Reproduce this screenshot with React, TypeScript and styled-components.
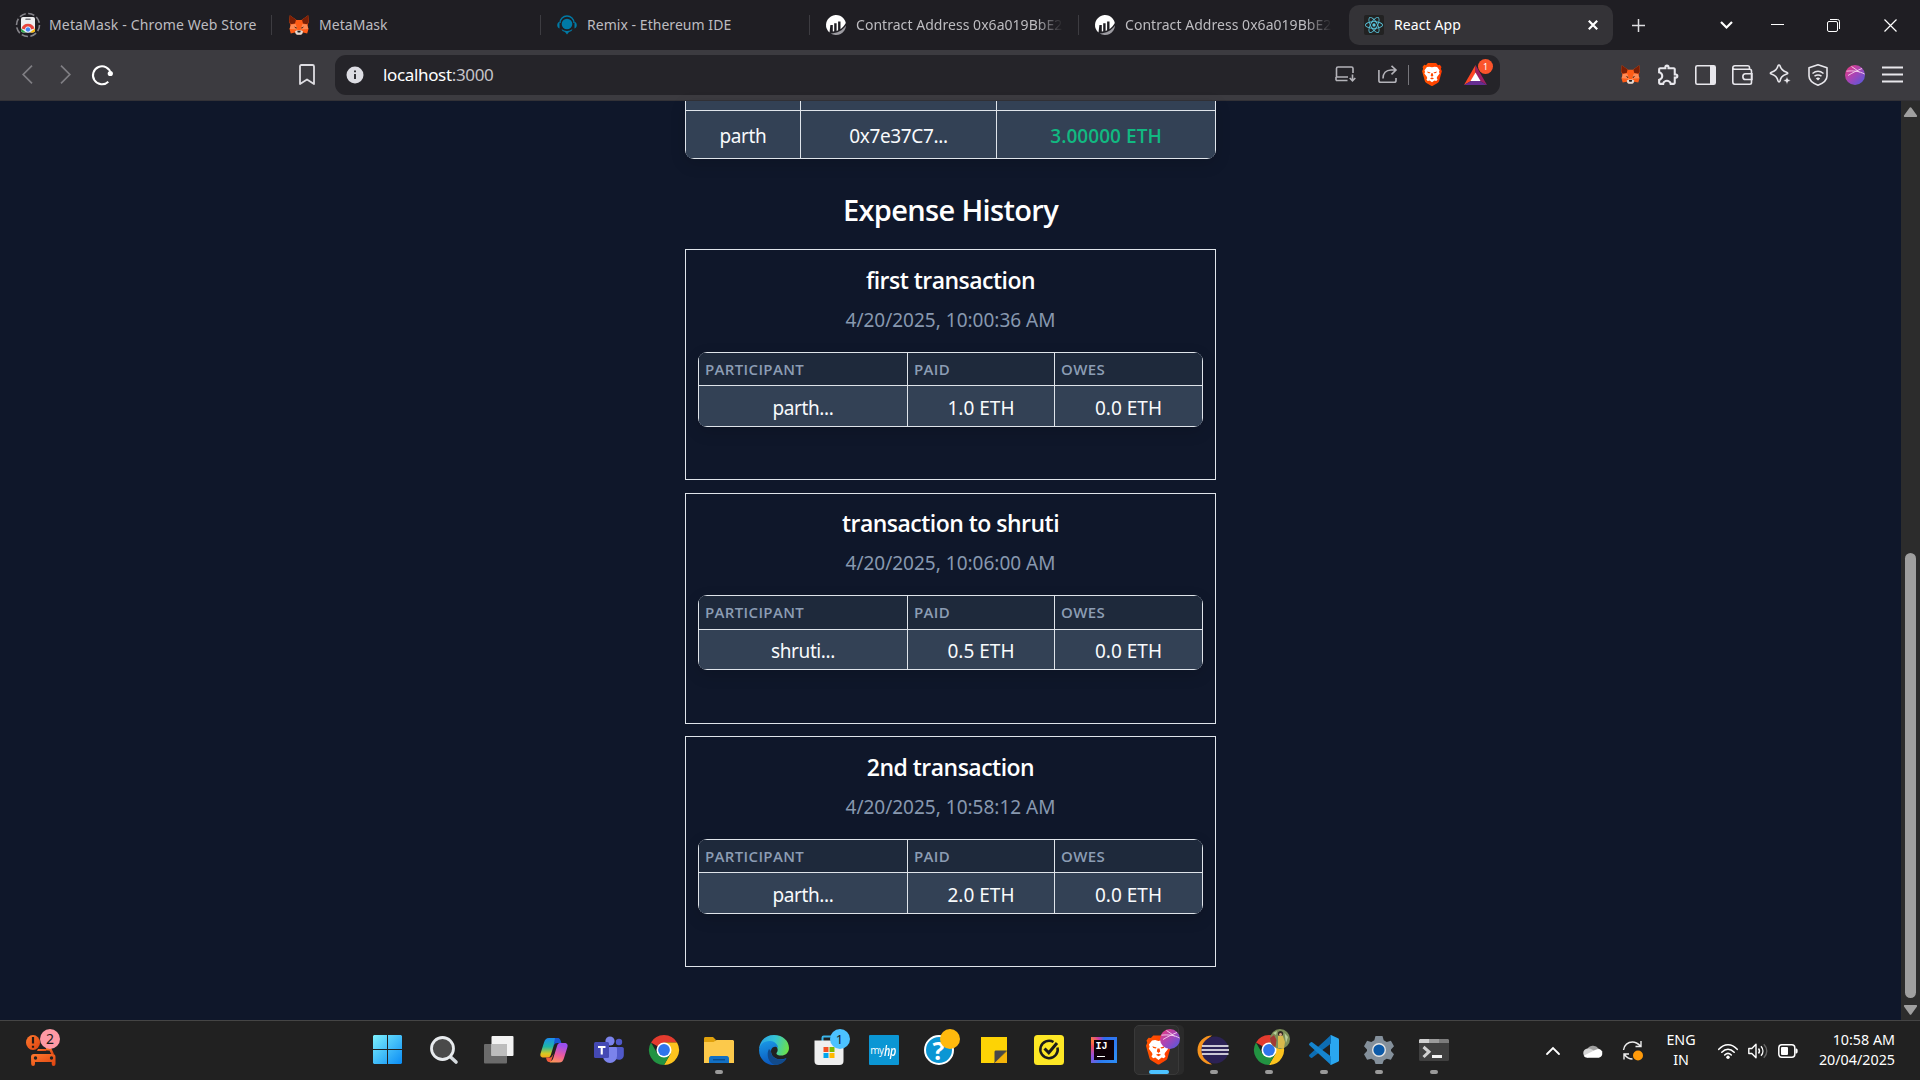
import React from 'react';
import styled, { createGlobalStyle } from 'styled-components';
import { SiReact } from 'react-icons/si';
import { MdOutlineExtension } from 'react-icons/md';

const GlobalStyle = createGlobalStyle`
  *, *::before, *::after { box-sizing: border-box; }
  html, body { margin: 0; padding: 0; background: #0f172a; overflow: hidden; }
  body { font-family: "Noto Sans", "Open Sans", sans-serif; color: #fff; }
  svg { display: block; flex: none; overflow: visible; }
`;

const Screen = styled.div`
  display: flex;
  flex-direction: column;
  width: 1920px;
  height: 1080px;
  overflow: hidden;
`;

/* ---------- tab strip ---------- */

const TabStrip = styled.header`
  display: flex;
  align-items: center;
  height: 50px;
  background: #1f1e23;
`;

const Tab = styled.div<{ $w: number; $pl: number; $gap?: number; $divider?: boolean }>`
  display: flex;
  align-items: center;
  gap: ${(p) => p.$gap ?? 10}px;
  width: ${(p) => p.$w}px;
  height: 20px;
  padding-left: ${(p) => p.$pl}px;
  border-right: 1px solid ${(p) => (p.$divider === false ? 'transparent' : '#3d3c41')};
`;

const TabTitle = styled.span<{ $fade?: boolean; $ls?: number }>`
  width: ${(p) => (p.$fade ? '207px' : 'auto')};
  overflow: hidden;
  white-space: nowrap;
  font-size: 14px;
  line-height: 22px;
  letter-spacing: ${(p) => p.$ls ?? 0.04}px;
  color: #bdbcc0;
  ${(p) => p.$fade && 'mask-image: linear-gradient(90deg, #000 87%, transparent 100%);'}
`;

const ActiveTab = styled.div`
  display: flex;
  align-items: center;
  width: 264px;
  height: 40px;
  margin-left: 1px;
  padding: 0 15px;
  border-radius: 10px;
  background: #343337;
`;

const ActiveTitle = styled(TabTitle)`
  flex: 1;
  margin-left: 10px;
  color: #fff;
`;

const WindowButtons = styled.div`
  display: flex;
  align-items: center;
  flex: 1;
`;

/* ---------- toolbar ---------- */

const Toolbar = styled.div`
  display: flex;
  align-items: center;
  height: 51px;
  padding-bottom: 1px;
  border-bottom: 1px solid #333237;
  background: #3c3b40;
`;

const Slot = styled.span<{ $ml: number }>`
  position: relative;
  display: inline-flex;
  flex: none;
  margin-left: ${(p) => p.$ml}px;
`;

const AddressBar = styled.div`
  display: flex;
  align-items: center;
  width: 1165px;
  height: 40px;
  margin-left: 20px;
  padding-left: 11px;
  border-radius: 11px;
  background: #252429;
`;

const Url = styled.span`
  flex: 1;
  margin-left: 19px;
  font-size: 17px;
  line-height: 24px;
  letter-spacing: -0.35px;
  color: #fff;
  span { color: #c4c3c8; }
`;

const AddressIcons = styled.div`
  display: flex;
  align-items: center;
  width: 165px;
`;

const Rule = styled.i`
  width: 1px;
  height: 20px;
  margin-left: 11px;
  background: #77767b;
`;

const RewardCount = styled.b`
  position: absolute;
  top: -6px;
  left: 14px;
  width: 15px;
  height: 15px;
  border-radius: 50%;
  background: #fb542b;
  font-size: 9px;
  font-weight: 400;
  line-height: 15px;
  text-align: center;
  color: #fff;
`;

/* ---------- page ---------- */

const Viewport = styled.div`
  display: flex;
  height: 919px;
  background: #0f172a;
`;

const Page = styled.main`
  display: flex;
  flex-direction: column;
  align-items: center;
  width: 1901px;
`;

const TableFrame = styled.div<{ $top?: boolean }>`
  overflow: hidden;
  border-radius: ${(p) => (p.$top ? '0 0 9px 9px' : '9px')};
  box-shadow: 0 5px 16px rgba(0, 0, 0, 0.14);
`;

const Grid = styled.div<{ $cols: string; $rows: string; $top?: boolean }>`
  display: grid;
  grid-template-columns: ${(p) => p.$cols};
  grid-template-rows: ${(p) => p.$rows};
  gap: 1px;
  padding: ${(p) => (p.$top ? '0 1px 1px' : '1px')};
  background: #dfe4ea;
`;

const Cell = styled.div<{ $accent?: boolean; $ls?: number; $pt?: number }>`
  display: flex;
  align-items: center;
  justify-content: center;
  padding-top: ${(p) => p.$pt ?? 4}px;
  background: #334155;
  font-family: ${(p) => (p.$accent ? '"Open Sans"' : '"Noto Sans"')}, sans-serif;
  font-size: 19px;
  font-weight: ${(p) => (p.$accent ? 650 : 400)};
  letter-spacing: ${(p) => p.$ls ?? 0}px;
  color: ${(p) => (p.$accent ? '#11b981' : '#f8fafc')};
`;

const HeadCell = styled.div`
  display: flex;
  align-items: center;
  padding: 0 0 1px 6px;
  background: #1e293b;
  font-family: "Open Sans", sans-serif;
  font-size: 15px;
  font-weight: 600;
  letter-spacing: 0.35px;
  color: #8c9db4;
`;

const Heading = styled.h2`
  margin: 30px 0 0;
  font-family: "Open Sans", sans-serif;
  font-size: 29px;
  font-weight: 640;
  line-height: 42px;
  letter-spacing: -0.65px;
`;

const History = styled.section`
  display: flex;
  flex-direction: column;
  gap: 12.6px;
  margin-top: 18px;
`;

const Card = styled.article<{ $pt: number }>`
  display: flex;
  flex-direction: column;
  width: 531px;
  height: 231px;
  padding: ${(p) => p.$pt}px 12px 12px;
  border: 1px solid #dfe4ea;
  text-align: center;
`;

const CardTitle = styled.h3`
  margin: 2px 0 0;
  font-family: "Open Sans", sans-serif;
  font-size: 23px;
  font-weight: 640;
  line-height: 32px;
  letter-spacing: -0.52px;
`;

const CardDate = styled.p`
  margin: 8px 0 16px;
  font-size: 19px;
  line-height: 32px;
  color: #8798af;
`;

const ScrollTrack = styled.div`
  display: flex;
  flex-direction: column;
  align-items: center;
  width: 19px;
  padding: 6px 0 5px;
  background: #2c2c2c;
`;

const Thumb = styled.div`
  width: 11px;
  height: 445px;
  margin: 436px 0 auto;
  border-radius: 6px;
  background: #9f9f9f;
`;

/* ---------- taskbar ---------- */

const Taskbar = styled.footer`
  display: flex;
  height: 60px;
  border-top: 1px solid #454545;
  background: #212121;
`;

const Widgets = styled.div`
  width: 360px;
  padding: 11px 0 0 25px;
`;

const Apps = styled.div`
  display: flex;
  width: 1101px;
`;

const AppSlot = styled.div`
  display: flex;
  flex-direction: column;
  align-items: center;
  width: 55px;
  padding-top: 14px;
  &:first-child { margin-right: 1px; }
`;

const AppTile = styled.div<{ $active?: boolean }>`
  position: relative;
  width: 44px;
  height: 30px;
  display: flex;
  justify-content: center;
  ${(p) =>
    p.$active &&
    `&::before {
      content: '';
      position: absolute;
      left: -3px;
      top: -10px;
      width: 45px;
      height: 50px;
      border: 1px solid #393939;
      border-radius: 5px;
      background: #2d2d2d;
      box-shadow: 5px 0 0 #2a2a2a;
    }
    & > svg { position: relative; }`}
`;

const Running = styled.i<{ $active?: boolean }>`
  z-index: 1;
  width: ${(p) => (p.$active ? 20 : 8)}px;
  height: 4px;
  margin-top: 5px;
  border-radius: 2px;
  background: ${(p) => (p.$active ? '#4cc2ff' : '#9a9a9a')};
`;

const Badge = styled.b<{ $bg: string; $left: number; $top: number; $size?: number }>`
  position: absolute;
  left: ${(p) => p.$left}px;
  top: ${(p) => p.$top}px;
  width: 20px;
  height: 20px;
  border-radius: 50%;
  background: ${(p) => p.$bg};
  font-size: ${(p) => p.$size ?? 13}px;
  font-weight: 400;
  line-height: 20px;
  text-align: center;
  color: #1b1b1b;
`;

const WidgetIcon = styled.div`
  position: relative;
  width: 36px;
  height: 34px;
`;

const Tray = styled.div`
  display: flex;
  align-items: center;
  flex: 1;
`;

const TrayText = styled.div<{ $w: number; $ml: number; $align: string }>`
  width: ${(p) => p.$w}px;
  margin: -1px 0 0 ${(p) => p.$ml}px;
  font-size: 14.3px;
  line-height: 20px;
  text-align: ${(p) => p.$align};
  white-space: pre-line;
`;

/* ---------- drawings ---------- */

const Fox = ({ s = 20 }: { s?: number }) => (
  <svg width={s} height={s} viewBox="0 0 20 20">
    <path d="M.8.3L7.500 5h5L19.200.3l.6 6.200-1.300 4 1 3.500-1.300 4.500-4-1L12 19.500H8l-2.200-2-4 1L.5 14l1-3.500L.2 6.500z" fill="#ff5c16" />
    <path d="M.8.3L7 4.800 6 8.500l-4.300.8L.2 6.500zM19.200.3L13 4.800l1 3.700 4.300.8 1.500-2.800z" fill="#7a1f06" />
    <path d="M2 9.500l4.500-.5 2 5.500-7.800-.5zM18 9.500l-4.500-.5-2 5.500 7.800-.5z" fill="#ff8a55" />
    <path d="M5 11.500l3 1.200-.8 1.100zM15 11.500l-3 1.200.8 1.100z" fill="#2b1508" />
    <path d="M6 16.300l2-1.100h4l2 1.100-.8 2.700-1.200.8H8l-1.200-.8z" fill="#dfd9d3" />
    <path d="M8.300 15.800h3.400l-.4 1.700H8.700z" fill="#1d1d1d" />
  </svg>
);

const WebStore = () => (
  <svg width="26" height="26" viewBox="0 0 26 26">
    <circle cx="13" cy="13" r="11.500" fill="none" stroke="#85848a" strokeWidth="1.600" strokeDasharray="6.500 2.500" />
    <path d="M6 7a2 2 0 012-2h10a2 2 0 012 2v11a2.500 2.500 0 01-2.500 2.500h-9A2.500 2.500 0 016 18z" fill="#eeeef0" />
    <path d="M11 7.300h4" stroke="#77767c" strokeWidth="1.600" strokeLinecap="round" />
    <path d="M6.500 16.500a6.800 6.800 0 0113 0l-3.500 1h-6z" fill="#e8453c" />
    <path d="M6 16.500l5 4H8.200A2.200 2.200 0 016 18.500z" fill="#2da94f" />
    <path d="M20 16.500l-5 4h2.800a2.200 2.200 0 002.200-2z" fill="#fbbc05" />
    <circle cx="13" cy="17.500" r="2.700" fill="#4285f4" stroke="#fff" strokeWidth=".8" />
  </svg>
);

const Remix = () => (
  <svg width="20" height="20" viewBox="0 0 20 20">
    <path d="M3 8a7 7 0 0114 0" fill="none" stroke="#007aa6" strokeWidth="1.400" />
    <path d="M2.500 6.500v7C-.5 12.500-.5 8 2.500 6.500zM17.500 6.500v7c3-1 3-5.500 0-7z" fill="#007aa6" />
    <circle cx="10" cy="9" r="5.300" fill="#007aa6" />
    <path d="M4.500 14c3 2.500 8 2.500 11 0l-1 2-2.500 1L10 19.500 8 17l-2.500-1z" fill="#007aa6" />
  </svg>
);

const Etherscan = () => (
  <svg width="20" height="20" viewBox="0 0 20 20">
    <path d="M3.500 17.600A10 10 0 1119.800 8c-1 2-3 4.500-5.300 6.200V6.500h-2.400v8.800l-1.500.8V8.300H8.200v8l-1.400.3V10H4.400z" fill="#fff" />
    <path d="M20 10.500A10 10 0 014.600 18.400C11 18.500 16.500 15.500 20 10.500z" fill="#9c9ba1" />
  </svg>
);

const ReactFavicon = styled.span`
  display: grid;
  place-items: center;
  width: 20px;
  height: 20px;
  border-radius: 2px;
  background: #222;
  color: #5ac6de;
`;

const Lion = ({ w, h, id }: { w: number; h: number; id: string }) => (
  <svg width={w} height={h} viewBox="0 0 24 28">
    <defs>
      <linearGradient id={id} x1="0" x2="1">
        <stop offset="0" stopColor="#ff5500" />
        <stop offset="1" stopColor="#ff3a00" />
      </linearGradient>
    </defs>
    <path d="M7 0h10l2.300 2.600 2.200-.4L23.500 5l-.7 2L24 10l-3.200 11.500c-.4 1.300-1 2-2 2.700L13 27.700a2 2 0 01-2 0l-5.800-3.500c-1-.7-1.600-1.400-2-2.700L0 10l1.200-3-.7-2 2-2.800 2.200.4z" fill={`url(#${id})`} />
    <path d="M12 5.300l3.200-.8 3 .4 3 3.900-.7 2.200.8 1.800-3.200 4.200-.3 1.600 1 1.500-1.600 1.800-2.200-.6L12 23.500l-3-2.200-2.200.6-1.600-1.800 1-1.500-.3-1.600-3.200-4.200.8-1.800-.7-2.200 3-3.900 3-.4z" fill="#fff" />
    <path d="M6 10.300l4.200 1.200-.8 1-2.400-.3zM18 10.300l-4.200 1.200.8 1 2.400-.3zM11 12.500l-.6 3 1.600 1.300 1.600-1.300-.6-3zM9.500 18.600l2.500-1 2.500 1-2.500 1.500z" fill={`url(#${id})`} />
  </svg>
);

const Bat = () => (
  <svg width="23" height="20" viewBox="0 0 23 20">
    <path d="M11.500 0L0 20l7-4 4.500-8z" fill="#ff4724" />
    <path d="M11.500 0L23 20l-7-4-4.500-8z" fill="#9e1f63" />
    <path d="M0 20h23l-7-4H7z" fill="#662d91" />
    <path d="M11.500 7.500L16.500 16h-10z" fill="#fff" />
  </svg>
);

const Orb = ({ s, id }: { s: number; id: string }) => (
  <svg width={s} height={s} viewBox="0 0 20 20">
    <defs>
      <linearGradient id={id} x1="0" y1="0" x2="1" y2="1">
        <stop offset=".1" stopColor="#e03c86" />
        <stop offset=".5" stopColor="#a545b8" />
        <stop offset="1" stopColor="#4a5be0" />
      </linearGradient>
    </defs>
    <circle cx="10" cy="10" r="10" fill={`url(#${id})`} />
    <path d="M1.500 6.200C8 5.500 14 6 19.600 9M3 10.500C7 8 12 5.500 17 3.500M6.500 1.500l8 5.500" fill="none" stroke="#f6d5ef" strokeWidth=".9" />
  </svg>
);

const Chrome = () => (
  <svg width="30" height="30" viewBox="0 0 30 30">
    <path d="M15 15L2 7.500A15 15 0 0128 7.500H15z" fill="#e33b2e" />
    <path d="M28 7.500A15 15 0 0115 30l6.500-11.300L15 7.500z" fill="#fcc31e" />
    <path d="M2 7.500A15 15 0 0015 30l6.500-11.300-13 0z" fill="#229342" />
    <circle cx="15" cy="15" r="7.500" fill="#fff" />
    <circle cx="15" cy="15" r="5.900" fill="#2f75ec" />
  </svg>
);

const StartLogo = () => (
  <svg width="29" height="29" viewBox="0 0 29 29">
    <defs>
      <linearGradient id="win" x1="0" y1="0" x2="1" y2="1">
        <stop offset="0" stopColor="#7df1fd" />
        <stop offset="1" stopColor="#0a8cf5" />
      </linearGradient>
    </defs>
    <path d="M1 0h13v14H0V1zM15 0h13l1 1v13H15zM0 15h14v14H1l-1-1zM15 15h14v13l-1 1H15z" fill="url(#win)" />
  </svg>
);

const SearchGlass = () => (
  <svg width="30" height="30" viewBox="0 0 30 30">
    <path d="M20.500 21l6.500 6" stroke="#d5dade" strokeWidth="3.600" strokeLinecap="round" />
    <circle cx="13.500" cy="13.500" r="11" fill="#4a4a4a" stroke="#e8ebee" strokeWidth="2.800" />
  </svg>
);

const TaskView = () => (
  <svg width="30" height="30" viewBox="0 0 30 30">
    <rect x="0" y="9" width="23" height="19.500" rx="1" fill="#6b6b6b" />
    <rect x="7.500" y="1" width="22" height="20" rx="1" fill="#f3f3f3" />
    <rect x="7.500" y="9" width="15.500" height="12" fill="#bdbdbd" />
  </svg>
);

const Copilot = () => (
  <svg width="30" height="30" viewBox="0 0 30 30">
    <defs>
      <linearGradient id="cpa" x1="0" y1="0" x2="0" y2="1">
        <stop offset="0" stopColor="#1c8cf0" />
        <stop offset=".45" stopColor="#1fb7a5" />
        <stop offset=".8" stopColor="#d6c822" />
        <stop offset="1" stopColor="#f7a51c" />
      </linearGradient>
      <linearGradient id="cpb" x1=".3" y1="0" x2="0" y2="1">
        <stop offset="0" stopColor="#9a4ff0" />
        <stop offset=".5" stopColor="#ee5b9c" />
        <stop offset="1" stopColor="#ffa24a" />
      </linearGradient>
    </defs>
    <path d="M19 3h-9c-3 0-4 1.500-5 4.500L1.700 18c-1 3 .3 4.500 2.800 4.500H9c1.500 0 2.300-1 2.800-2.500L15.500 8c1-3 2-4 5-3.500z" fill="url(#cpa)" />
    <path d="M11 27.500h9c3 0 4-1.500 5-4.500L28.300 12.500c1-3-.3-4.500-2.800-4.500H21c-1.500 0-2.300 1-2.800 2.500L14.500 22.500c-1 3-2 4-5 3.500z" fill="url(#cpb)" />
    <path d="M16 3h3c2 .5 2.600 2 3.400 5H20c-3-.2-4.200 0-5.500 3z" fill="#1857d6" />
    <path d="M7 22.500h4.500c1-.4 2-2 3-3.500l-2.500 7.500-2.300.5C8 26.500 7.500 25 7 22.500z" fill="#f05a3c" />
  </svg>
);

const Teams = () => (
  <svg width="30" height="30" viewBox="0 0 30 30">
    <circle cx="25" cy="7" r="3.200" fill="#5059c9" />
    <circle cx="16" cy="6" r="4.600" fill="#7b83eb" />
    <path d="M21 12h7c1 0 1.800.8 1.800 1.800V20c0 4-4 6-8 4z" fill="#5059c9" />
    <path d="M9 12h12.500c1 0 1.500.6 1.500 1.500V21a7 7 0 01-14 0z" fill="#7b83eb" />
    <rect x="0" y="7" width="15" height="16" rx="1.500" fill="#4449b4" />
    <path d="M4 11h7.500v1.900H8.800v6.600H6.700v-6.600H4z" fill="#fff" />
  </svg>
);

const Explorer = () => (
  <svg width="30" height="30" viewBox="0 0 30 30">
    <path d="M0 3.500C0 2.500.7 2 1.500 2H9l3 3-2 4H0z" fill="#e0a10c" />
    <path d="M0 7h9.500l3-2H29l1 1v22H0z" fill="#fcc94b" />
    <path d="M5 28v-4.500C5 21.500 6.500 21 8 21h14c1.500 0 3 .5 3 2.500V28z" fill="#1270c4" />
    <path d="M9 24.700h12" stroke="#0a4d8d" strokeWidth="1.400" />
  </svg>
);

const Edge = () => (
  <svg width="30" height="30" viewBox="0 0 30 30">
    <defs>
      <linearGradient id="ega" x1="0" y1=".3" x2="1" y2=".5">
        <stop offset="0" stopColor="#2aa3e6" />
        <stop offset=".5" stopColor="#35c4d4" />
        <stop offset="1" stopColor="#6be04a" />
      </linearGradient>
      <linearGradient id="egb" x1="0" y1="0" x2=".3" y2="1">
        <stop offset="0" stopColor="#1a9be8" />
        <stop offset="1" stopColor="#0b58bd" />
      </linearGradient>
    </defs>
    <path d="M0 14C1 5 7 0 15 0c9 0 15 6 15 13 0 5-4 7.500-7.500 7.500-3.500 0-5.500-1-5-2.500 2-2 1.500-5.500-1.500-7.500C11 7.500 3 9 0 14z" fill="url(#ega)" />
    <path d="M0 15c.5-6 6-9.500 11.500-9C16 6.500 19 9.500 19 13c-2-2.500-7-1-7 3 0 7 8 10.500 15.500 7C25 27.500 20 30 15 30 7 30 0 24 0 15z" fill="url(#egb)" />
    <path d="M10 14c-3 5-1 14 6 16 5 0 9.500-2.500 11.500-6.500C20 27 11.500 22.500 12 16z" fill="#114a8b" />
  </svg>
);

const Store = () => (
  <svg width="30" height="30" viewBox="0 0 30 30">
    <path d="M8.500 7V2.700C8.500 2 9 1.500 9.700 1.500H20" fill="none" stroke="#3bb5ea" strokeWidth="2" />
    <path d="M.5 5.500h29V26a4 4 0 01-4 4h-21a4 4 0 01-4-4z" fill="#efefef" />
    <path d="M9.500 12h5v5h-5z" fill="#f25022" />
    <path d="M15.500 12h5v5h-5z" fill="#7fba00" />
    <path d="M9.500 18h5v5h-5z" fill="#00a4ef" />
    <path d="M15.500 18h5v5h-5z" fill="#ffb900" />
  </svg>
);

const MyHp = styled.div`
  display: flex;
  align-items: center;
  justify-content: center;
  width: 30px;
  height: 30px;
  border-radius: 1px;
  background: #0b96d4;
  font: 500 10px/30px "Open Sans", sans-serif;
  letter-spacing: -0.4px;
  i {
    width: 13px;
    font-size: 15px;
    font-weight: 600;
    letter-spacing: -0.5px;
    transform: scaleX(0.72);
    transform-origin: left;
  }
`;

const Help = styled.div`
  width: 30px;
  height: 30px;
  border: 2px solid #fff;
  border-radius: 50%;
  background: #0b96d4;
  font: 700 25px/27px "Open Sans", sans-serif;
  text-align: center;
`;

const Sticky = () => (
  <svg width="30" height="30" viewBox="0 0 30 30">
    <path d="M2 2h26v14L15 28H2z" fill="#fdd305" />
    <path d="M28 16v12H15z" fill="#f4b40a" />
    <path d="M15.500 28V17c0-1 .5-1.500 1.500-1.500h11z" fill="#484848" />
  </svg>
);

const Norton = () => (
  <svg width="30" height="30" viewBox="0 0 30 30">
    <rect width="30" height="30" rx="3.500" fill="#fde725" />
    <path d="M19.500 7a8.700 8.700 0 104 5.500" fill="none" stroke="#1c1c1c" strokeWidth="2.500" />
    <path d="M10.500 13.500l4.300 4.300L23 8" fill="none" stroke="#1c1c1c" strokeWidth="3" />
  </svg>
);

const IdeaTile = styled.div`
  width: 26px;
  height: 26px;
  margin-top: 2px;
  padding: 3px;
  background: conic-gradient(from 0deg, #2f6cf0, #2d8cf5 35%, #2b7bf0 55%, #9a4fd8 68%, #f04a5a 80%, #fc7a3d 86%, #c93aa8 93%, #2f6cf0);
`;

const IdeaFace = styled.div`
  display: flex;
  flex-direction: column;
  justify-content: space-between;
  width: 20px;
  height: 20px;
  padding: 1px 0 3px 2px;
  background: #0d0008;
  font: 700 10px/11px "Liberation Mono", monospace;
  &::after {
    content: '';
    width: 8px;
    height: 1px;
    margin-left: 1px;
    background: #fff;
  }
`;

const Eclipse = () => (
  <svg width="30" height="30" viewBox="0 0 30 30">
    <path d="M13 .5A14.500 14.500 0 0013 29.500 17 17 0 0113 .5z" fill="#f7941e" />
    <circle cx="16" cy="15" r="13.600" fill="#2c2255" />
    <path d="M3 11h26.500M2.500 15h27.500M3 19h26.500" stroke="#fff" strokeWidth="1.700" />
  </svg>
);

const VsCode = () => (
  <svg width="30" height="30" viewBox="0 0 30 30">
    <path d="M22 0l7 3.200c.6.300 1 .8 1 1.500v20.600c0 .7-.4 1.200-1 1.500L22 30l-1-1V1z" fill="#2aa7f0" />
    <path d="M22 0v8.500L3.200 22.700a1.300 1.300 0 01-1.700-.1L.4 21.500a1.300 1.300 0 010-1.800z" fill="#0d6db3" />
    <path d="M22 30v-8.500L3.200 7.300a1.300 1.300 0 00-1.700.1L.4 8.500a1.300 1.300 0 000 1.800z" fill="#1585cf" />
  </svg>
);

const Gear = () => (
  <svg width="30" height="30" viewBox="0 0 30 30">
    <path d="M11.500 1h7l1.200 4.200 3 1.700 4.200-1.200 3.100 5.600-3 3.200v1.600l3 3.200-3.100 5.500-4.200-1.100-3 1.700L18.500 29h-7l-1.200-3.600-3-1.700-4.200 1.100L0 19.300l3-3.200v-1.600l-3-3.200 3.100-5.600 4.200 1.200 3-1.700z" fill="#84909b" />
    <circle cx="15" cy="15" r="7" fill="#e6e6e6" />
    <circle cx="15" cy="15" r="5.600" fill="#0c5aa8" />
  </svg>
);

const Terminal = () => (
  <svg width="30" height="30" viewBox="0 0 30 30">
    <rect y="4" width="30" height="22" rx="1.500" fill="#404040" />
    <path d="M1 4h9v4H0V5z" fill="#cfcfcf" />
    <path d="M10 4h10v4H10z" fill="#9b9b9b" />
    <path d="M20 4h9l1 1v3H20z" fill="#7c7c7c" />
    <path d="M4.500 12l5.500 4.800L4.500 22" fill="none" stroke="#d0d0d0" strokeWidth="3" />
    <path d="M13 21.500h10" stroke="#f2f2f2" strokeWidth="3" />
  </svg>
);

const Portrait = () => (
  <svg width="20" height="20" viewBox="0 0 20 20">
    <circle cx="10" cy="10" r="10" fill="#7d8f58" />
    <path d="M0 9l4-3 2.500 5-1 7A10 10 0 010 9z" fill="#a33a35" />
    <path d="M8 7l4.500-1L15 13l-1 6-6 0z" fill="#d9b94c" />
    <circle cx="10.500" cy="4.500" r="2.600" fill="#332a22" />
    <circle cx="10.500" cy="5.600" r="1.500" fill="#d6a684" />
    <path d="M14.500 4l3.500 4-2 6zM3 4l4-2-1 4z" fill="#b9cf9a" />
  </svg>
);

const Car = () => (
  <svg width="33" height="34" viewBox="0 0 33 34">
    <defs>
      <linearGradient id="car" x1="0" y1="0" x2="1" y2="1">
        <stop offset="0" stopColor="#ff7a2e" />
        <stop offset="1" stopColor="#dd4210" />
      </linearGradient>
    </defs>
    <ellipse cx="8" cy="10.500" rx="7" ry="7.500" fill="url(#car)" />
    <path d="M8 5v6.500M8 13.700v2" stroke="#231a16" strokeWidth="2.200" />
    <path d="M21 17l4.500.5 2.300 5" fill="none" stroke="url(#car)" strokeWidth="2.600" />
    <path d="M13 17h9l-1 2h-9z" fill="url(#car)" />
    <path d="M6 25a3 3 0 013-3h18.500a3 3 0 013 3v7a1.800 1.800 0 01-3.800 0v-2H10v2a1.800 1.800 0 01-3.800 0z" fill="url(#car)" />
    <circle cx="10.500" cy="26" r="1.700" fill="#212121" />
    <circle cx="26.500" cy="26" r="1.700" fill="#212121" />
  </svg>
);

/* ---------- data ---------- */

const expenses = [
  { title: 'first transaction', date: '4/20/2025, 10:00:36 AM', who: 'parth...', paid: '1.0 ETH', owes: '0.0 ETH', rows: '32px 40px', pt: 12 },
  { title: 'transaction to shruti', date: '4/20/2025, 10:06:00 AM', who: 'shruti...', paid: '0.5 ETH', owes: '0.0 ETH', rows: '33px 39px', pt: 11 },
  { title: '2nd transaction', date: '4/20/2025, 10:58:12 AM', who: 'parth...', paid: '2.0 ETH', owes: '0.0 ETH', rows: '32px 40px', pt: 12 },
];

type AppEntry = { icon: React.ReactNode; badge?: React.ReactNode; running?: boolean; active?: boolean };

const apps: AppEntry[] = [
  { icon: <StartLogo /> },
  { icon: <SearchGlass /> },
  { icon: <TaskView /> },
  { icon: <Copilot /> },
  { icon: <Teams /> },
  { icon: <Chrome /> },
  { icon: <Explorer />, running: true },
  { icon: <Edge /> },
  { icon: <Store />, badge: <Badge $bg="#4cc2ff" $left={23} $top={-6}>1</Badge> },
  { icon: <MyHp>my<i>hp</i></MyHp> },
  { icon: <Help>?</Help>, badge: <Badge $bg="#ffb90d" $left={23} $top={-6} /> },
  { icon: <Sticky /> },
  { icon: <Norton /> },
  { icon: <IdeaTile><IdeaFace>IJ</IdeaFace></IdeaTile> },
  { icon: <Lion w={25} h={30} id="lionTask" />, badge: <Badge as="span" $bg="none" $left={23} $top={-6}><Orb s={20} id="orbTask" /></Badge>, running: true, active: true },
  { icon: <Eclipse />, running: true },
  { icon: <Chrome />, badge: <Badge as="span" $bg="none" $left={23} $top={-6}><Portrait /></Badge>, running: true },
  { icon: <VsCode />, running: true },
  { icon: <Gear />, running: true },
  { icon: <Terminal />, running: true },
];

export default function App() {
  return (
    <Screen>
      <GlobalStyle />
      <TabStrip>
        <Tab $w={272} $pl={15} $gap={8}><WebStore /><TabTitle $ls={0.15}>MetaMask - Chrome Web Store</TabTitle></Tab>
        <Tab $w={269} $pl={17}><Fox /><TabTitle>MetaMask</TabTitle></Tab>
        <Tab $w={269} $pl={16}><Remix /><TabTitle>Remix - Ethereum IDE</TabTitle></Tab>
        <Tab $w={269} $pl={16}><Etherscan /><TabTitle $fade>Contract Address 0x6a019BbE25</TabTitle></Tab>
        <Tab $w={269} $pl={16} $divider={false}><Etherscan /><TabTitle $fade>Contract Address 0x6a019BbE25</TabTitle></Tab>
        <ActiveTab>
          <ReactFavicon><SiReact size={18} /></ReactFavicon>
          <ActiveTitle $ls={0.1}>React App</ActiveTitle>
          <svg width="10" height="10" viewBox="0 0 10 10"><path d="M.8.8l8.400 8.400M9.200.8L.8 9.200" stroke="#fff" strokeWidth="2.200" /></svg>
        </ActiveTab>
        <WindowButtons>
          <Slot $ml={19}><svg width="13" height="13" viewBox="0 0 13 13"><path d="M6.500 0v13M0 6.500h13" stroke="#dddde0" strokeWidth="1.500" /></svg></Slot>
          <Slot $ml={75}><svg width="13" height="8" viewBox="0 0 13 8"><path d="M1 1l5.500 5.500L12 1" fill="none" stroke="#fff" strokeWidth="2.200" /></svg></Slot>
          <Slot $ml={38}><svg width="13" height="3" viewBox="0 0 13 3"><path d="M0 .5h13" stroke="#fff" /></svg></Slot>
          <Slot $ml={43}><svg width="13" height="13" viewBox="0 0 13 13"><path d="M.5 4a1.500 1.500 0 011.500-1.500h7A1.500 1.500 0 0110.500 4v7A1.500 1.500 0 019 12.500H2A1.500 1.500 0 01.5 11zM3 .5h7.500a2 2 0 012 2V10" fill="none" stroke="#fff" /></svg></Slot>
          <Slot $ml={44}><svg width="13" height="13" viewBox="0 0 13 13"><path d="M.5.5l12 12M12.500.5l-12 12" stroke="#fff" strokeWidth="1.200" /></svg></Slot>
        </WindowButtons>
      </TabStrip>

      <Toolbar>
        <Slot $ml={22}><svg width="11" height="19" viewBox="0 0 11 19"><path d="M10 .7L1.200 9.500l8.800 8.800" fill="none" stroke="#7f7e83" strokeWidth="1.700" /></svg></Slot>
        <Slot $ml={27}><svg width="11" height="19" viewBox="0 0 11 19"><path d="M1 .7l8.800 8.800L1 18.300" fill="none" stroke="#7f7e83" strokeWidth="1.700" /></svg></Slot>
        <Slot $ml={21}><svg width="21" height="20" viewBox="0 0 21 20"><path d="M16.300 16.700A9 9 0 1118.800 8.500" fill="none" stroke="#fff" strokeWidth="2" /><circle cx="18.300" cy="8.500" r="2.600" fill="#fff" /></svg></Slot>
        <Slot $ml={186}><svg width="16" height="21" viewBox="0 0 16 21"><path d="M1 2.500C1 1.500 1.500 1 2.500 1h11c1 0 1.500.5 1.500 1.500V20l-7-4.500L1 20z" fill="none" stroke="#dedde2" strokeWidth="1.800" strokeLinejoin="round" /></svg></Slot>
        <AddressBar>
          <svg width="18" height="18" viewBox="0 0 18 18"><circle cx="9" cy="9" r="8.500" fill="#dddde3" /><path d="M9 8v5M9 4.500v1.800" stroke="#2a292e" strokeWidth="1.900" /></svg>
          <Url>localhost<span>:3000</span></Url>
          <AddressIcons>
            <svg width="21" height="17" viewBox="0 0 21 17"><path d="M12.500 14.500H1M1.500 11V2.500C1.500 1.700 2 1 3 1h13.500c.8 0 1.500.5 1.500 1.500V7M1.500 11H13M17.500 8.500v6M14.700 12l2.800 2.800 2.800-2.800M1 14.500V11" fill="none" stroke="#b4b3b9" strokeWidth="1.600" /></svg>
            <Slot $ml={22}><svg width="19" height="19" viewBox="0 0 19 19"><path d="M.9 5v10.500c0 1.200.6 1.800 1.800 1.800h13.500c1 0 1.800-.6 1.800-1.800V13M5 13.500c0-5 3-8.500 8-8.500h4.500M13.500.8L18 5l-4.500 4.300" fill="none" stroke="#b4b3b9" strokeWidth="1.600" /></svg></Slot>
            <Rule />
            <Slot $ml={13}><Lion w={20} h={23} id="lionBar" /></Slot>
            <Slot $ml={22}><Bat /><RewardCount>1</RewardCount></Slot>
          </AddressIcons>
        </AddressBar>
        <Slot $ml={121}><Fox s={19} /></Slot>
        <Slot $ml={16}><MdOutlineExtension size={25} color="#e8e7ec" /></Slot>
        <Slot $ml={14}><svg width="21" height="20" viewBox="0 0 21 20"><rect x=".8" y=".8" width="19.400" height="18.400" rx="1.500" fill="none" stroke="#e8e7ec" strokeWidth="1.600" /><path d="M15 1h5v18h-5z" fill="#e8e7ec" /></svg></Slot>
        <Slot $ml={16}><svg width="21" height="20" viewBox="0 0 21 20"><path d="M17.500 4V2.500c0-1-.5-1.700-1.500-1.700H2.800A2 2 0 00.8 2.800M.8 2.800V17c0 1.500.7 2.200 2 2.200h15c1.300 0 1.700-.7 1.700-1.700V6c0-1.300-.7-1.700-1.700-1.700h-15C1.500 4.300.8 3.500.8 2.800zM20 8.800h-6.500c-3.500 0-3.500 5.700 0 5.700H20z" fill="none" stroke="#e8e7ec" strokeWidth="1.600" /></svg></Slot>
        <Slot $ml={17}><svg width="21" height="21" viewBox="0 0 21 21"><path d="M9 1c.5 0 .8.3 1 .8.8 3.200 2.200 5 6.700 6.500 1.400.5 1.400 1.300 0 1.700-3 1-4 1.700-5 3-.8 1-1.300 2.300-1.700 4-.4 1.200-1.500 1.200-1.900 0-.9-4-2.600-5.800-6.700-7-1.400-.4-1.400-1.200 0-1.700C5.700 7 7.200 5 8 1.800c.2-.5.500-.8 1-.8z" fill="none" stroke="#e8e7ec" strokeWidth="1.600" /><path d="M17 12.500l1.200 2.800 2.800 1.200-2.800 1.200L17 20.500l-1.200-2.800-2.800-1.200 2.800-1.200z" fill="#e8e7ec" stroke="#3c3b40" strokeWidth=".6" /></svg></Slot>
        <Slot $ml={17}><svg width="20" height="22" viewBox="0 0 20 22"><path d="M10 .8l9 3V12c0 4.500-4.500 7.500-9 9.200C5.500 19.500 1 16.500 1 12V3.800z" fill="none" stroke="#e8e7ec" strokeWidth="1.600" strokeLinejoin="round" /><path d="M4.500 9.500c3.500-2.800 7.500-2.800 11 0M6.500 12.200c2.200-1.600 4.800-1.600 7 0" fill="none" stroke="#e8e7ec" strokeWidth="1.500" /><path d="M7.800 14.500c1.500-1.200 2.900-1.200 4.400 0L10 16.500z" fill="#e8e7ec" /></svg></Slot>
        <Slot $ml={17}><Orb s={20} id="orbBar" /></Slot>
        <Slot $ml={17}><svg width="21" height="17" viewBox="0 0 21 17"><path d="M0 1.500h21M0 8.500h21M0 15.500h21" stroke="#e8e7ec" strokeWidth="1.800" /></svg></Slot>
      </Toolbar>

      <Viewport>
        <Page>
          <TableFrame $top>
            <Grid $top $cols="114px 195px 218px" $rows="9px 47px">
              <Cell /><Cell /><Cell />
              <Cell $pt={2} $ls={-0.35}>parth</Cell>
              <Cell $pt={2} $ls={-0.35}>0x7e37C7...</Cell>
              <Cell $pt={2} $accent $ls={0.05}>3.00000 ETH</Cell>
            </Grid>
          </TableFrame>
          <Heading>Expense History</Heading>
          <History>
            {expenses.map((e) => (
              <Card key={e.title} $pt={e.pt}>
                <CardTitle>{e.title}</CardTitle>
                <CardDate>{e.date}</CardDate>
                <TableFrame>
                  <Grid $cols="208px 146px 147px" $rows={e.rows}>
                    <HeadCell>PARTICIPANT</HeadCell>
                    <HeadCell>PAID</HeadCell>
                    <HeadCell>OWES</HeadCell>
                    <Cell $ls={-0.4}>{e.who}</Cell>
                    <Cell>{e.paid}</Cell>
                    <Cell>{e.owes}</Cell>
                  </Grid>
                </TableFrame>
              </Card>
            ))}
          </History>
        </Page>
        <ScrollTrack>
          <svg width="13" height="10" viewBox="0 0 13 10"><path d="M5.600.8a1 1 0 011.800 0L13 8.500c.3.800 0 1.500-1 1.500H1C0 10-.3 9.300 0 8.500z" fill="#9f9f9f" /></svg>
          <Thumb />
          <svg width="13" height="10" viewBox="0 0 13 10"><path d="M5.600 9.200a1 1 0 001.800 0L13 1.500C13.300.7 13 0 12 0H1C0 0-.3.7 0 1.500z" fill="#9f9f9f" /></svg>
        </ScrollTrack>
      </Viewport>

      <Taskbar>
        <Widgets>
          <WidgetIcon>
            <Car />
            <Badge $bg="#ff99a4" $left={15} $top={-3} $size={14}>2</Badge>
          </WidgetIcon>
        </Widgets>
        <Apps>
          {apps.map((a, i) => (
            <AppSlot key={i}>
              <AppTile $active={a.active}>
                {a.icon}
                {a.badge}
              </AppTile>
              {a.running && <Running $active={a.active} />}
            </AppSlot>
          ))}
        </Apps>
        <Tray>
          <Slot $ml={85}><svg width="14" height="9" viewBox="0 0 14 9"><path d="M1 8l6-6 6 6" fill="none" stroke="#fff" strokeWidth="1.800" strokeLinecap="round" /></svg></Slot>
          <Slot $ml={23}><svg width="20" height="14" viewBox="0 0 20 14"><path d="M4 6A6.500 6.500 0 0115.500 4.500L20 8 8 12z" fill="#a0a0a0" /><path d="M4.500 4.500c3-.5 5 1 8 3L5 13.500a4.500 4.500 0 01-.5-9z" fill="#d5d5d5" /><path d="M15 5a4.400 4.400 0 01.8 8.700H4.500c-2 0-3-.9-3.800-2L12 6z" fill="#fff" /></svg></Slot>
          <Slot $ml={19}><svg width="21" height="21" viewBox="0 0 21 21"><path d="M1.500 10C2 5 6 2 10.500 2c3.500 0 5.500 1.500 8 4M19 1v5.500h-5.500M2 19.500V14h5M2.500 14.500c2 3 4.500 4.500 8 4.500" fill="none" stroke="#ededed" strokeWidth="1.400" /><circle cx="16" cy="15.500" r="5" fill="#ff9a0a" /></svg></Slot>
          <TrayText $w={40} $ml={18} $align="center">{'ENG\nIN'}</TrayText>
          <Slot $ml={17}><svg width="20" height="16" viewBox="0 0 20 16"><path d="M.8 6.300c5.500-6 12.900-6 18.400 0M3.800 9.200c4-4 8.400-4 12.400 0M6.700 12c2.200-2.100 4.400-2.100 6.600 0" fill="none" stroke="#fff" strokeWidth="1.600" strokeLinecap="round" /><circle cx="10" cy="14.200" r="1.700" fill="#fff" /></svg></Slot>
          <Slot $ml={10}><svg width="20" height="16" viewBox="0 0 20 16"><path d="M.8 5.500h3L8 1.300v13.400l-4.200-4.200h-3z" fill="none" stroke="#fff" strokeWidth="1.400" strokeLinejoin="round" /><path d="M10.500 5.500c1.200 1.500 1.200 3.500 0 5M13 3.200c2.500 2.800 2.500 6.800 0 9.600" fill="none" stroke="#fff" strokeWidth="1.400" /><path d="M15.800 1.200c4 4 4 9.600 0 13.600" fill="none" stroke="#666" strokeWidth="1.400" /></svg></Slot>
          <Slot $ml={10}><svg width="20" height="14" viewBox="0 0 20 14"><rect x=".8" y=".8" width="16" height="12.400" rx="3" fill="none" stroke="#fff" strokeWidth="1.500" /><rect x="3" y="3" width="7" height="8" rx="1" fill="#fff" /><path d="M17.500 4.500c1.500 0 2.200.6 2.200 2.500s-.7 2.500-2.200 2.500z" fill="#fff" /></svg></Slot>
          <TrayText $w={97} $ml={0} $align="right">{'10:58 AM\n20/04/2025'}</TrayText>
        </Tray>
      </Taskbar>
    </Screen>
  );
}
